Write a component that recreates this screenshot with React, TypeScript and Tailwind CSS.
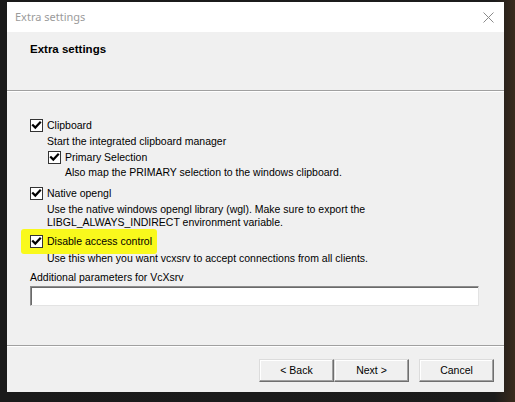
import React from "react";

function CheckBox() {
    return (
        <span className="flex h-[13px] w-[13px] shrink-0 items-center justify-center border border-[#333333] bg-white">
            <svg width="11" height="11" viewBox="0 0 11 11">
                <path d="M2 5.2 L4.3 7.6 L9 2.6" fill="none" stroke="#000" strokeWidth="2.2" strokeLinecap="square" />
            </svg>
        </span>
    );
}

function CheckRow({ label }: { label: string }) {
    return (
        <div className="flex h-[13px] items-center gap-[4px]">
            <CheckBox />
            <span className="leading-[13px]">{label}</span>
        </div>
    );
}

function WinButton({ children }: { children: React.ReactNode }) {
    return (
        <button className="flex h-[23px] w-[75px] items-center justify-center border border-t-[#dcdcdc] border-l-[#dcdcdc] border-b-[#6f6f6f] border-r-[#6f6f6f] bg-[#f0f0f0] text-black shadow-[inset_-1px_-1px_0_#a0a0a0,inset_1px_1px_0_#ffffff]">
            {children}
        </button>
    );
}

export default function App() {
    return (
        <div className="h-[402px] w-[515px] overflow-hidden bg-[linear-gradient(90deg,#1a1a1a_0%,#1c1c1c_96%,#3a2a1c_100%)] pt-[2px] pl-[7px]">
            <div className="flex h-[390px] w-[497px] flex-col bg-[#f0f0f0] text-[10.5px] text-black [font-family:'Liberation_Sans',Arial,sans-serif]">
                {/* title bar */}
                <div className="flex h-[30px] items-center justify-between bg-white pl-[8px] pr-[10px]">
                    <span className="text-[11px] text-[#9b9b9b] [font-family:'Noto_Sans',sans-serif]">Extra settings</span>
                    <svg width="11" height="11" viewBox="0 0 11 11">
                        <path d="M0.5 0.5 L10.5 10.5 M10.5 0.5 L0.5 10.5" stroke="#8a8a8a" strokeWidth="1" />
                    </svg>
                </div>

                {/* header */}
                <div className="h-[58px] pl-[23px] pt-[10px]">
                    <div className="text-[11.5px] font-bold leading-[14px]">Extra settings</div>
                </div>
                <div className="h-px bg-[#a0a0a0]" />
                <div className="h-px bg-white" />

                {/* body */}
                <div className="flex h-[253px] flex-col pl-[23px] pt-[27px] leading-[13px]">
                    <CheckRow label="Clipboard" />
                    <div className="mt-[3px] pl-[17px]">Start the integrated clipboard manager</div>
                    <div className="mt-[3px] pl-[18px]">
                        <CheckRow label="Primary Selection" />
                        <div className="mt-[2px] pl-[17px]">Also map the PRIMARY selection to the windows clipboard.</div>
                    </div>
                    <div className="mt-[8px]">
                        <CheckRow label="Native opengl" />
                    </div>
                    <div className="mt-[3px] pl-[17px]">
                        Use the native windows opengl library (wgl). Make sure to export the
                        <br />
                        LIBGL_ALWAYS_INDIRECT environment variable.
                    </div>
                    <div className="mt-[6px] flex">
                        <div className="-mx-[9px] -my-[6px] flex rounded-[3px] bg-[#f9f91c] py-[6px] pl-[9px] pr-[5px]">
                            <CheckRow label="Disable access control" />
                        </div>
                    </div>
                    <div className="mt-[4px] pl-[17px]">Use this when you want vcxsrv to accept connections from all clients.</div>
                    <div className="mt-[6px]">Additional parameters for VcXsrv</div>
                    <input
                        className="mt-[2px] h-[20px] w-[449px] border border-t-[#8c8c8c] border-l-[#8c8c8c] border-b-[#e3e3e3] border-r-[#e3e3e3] bg-white shadow-[inset_1px_1px_0_#6a6a6a] outline-none"
                        defaultValue=""
                    />
                </div>

                {/* footer */}
                <div className="h-px bg-[#a0a0a0]" />
                <div className="h-px bg-white" />
                <div className="flex justify-end pt-[12px] pr-[10px]">
                    <div className="flex">
                        <WinButton>&lt; Back</WinButton>
                        <WinButton>Next &gt;</WinButton>
                    </div>
                    <div className="ml-[10px]">
                        <WinButton>Cancel</WinButton>
                    </div>
                </div>
            </div>
        </div>
    );
}
